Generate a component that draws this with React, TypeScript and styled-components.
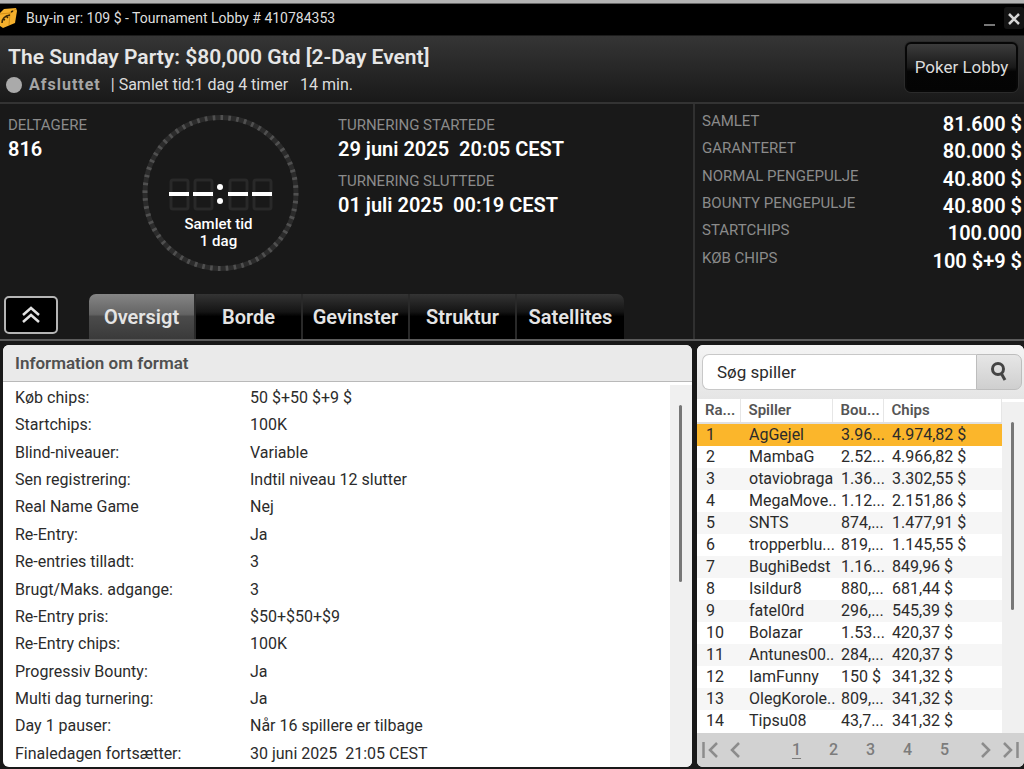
import React, { useState } from "react";
import styled, { createGlobalStyle, css } from "styled-components";

const GlobalStyle = createGlobalStyle`
  * { box-sizing: border-box; }
  body { margin: 0; background: #191919; font-family: Roboto, "Liberation Sans", sans-serif; }
  button, input { font-family: inherit; }
  h1, h2, p, dl, dt, dd, ol { margin: 0; padding: 0; }
`;

const Window = styled.div`
  display: flex;
  flex-direction: column;
  min-height: 100vh;
  background: #191919;
  border-top: 3px solid #b4b4b4;
  color: #fff;
`;

const TitleBar = styled.header`
  display: flex;
  align-items: center;
  height: 33px;
  padding-bottom: 3px;
  background: #000;
  border-top: 1px solid #666;
  border-bottom: 1px solid #1c1c1c;
`;

const TitleText = styled.p`
  flex: 1;
  margin-left: 9px;
  font-size: 14px;
  line-height: 20px;
  color: #dedede;
`;

const WindowButton = styled.button<{ $raised?: boolean }>`
  display: flex;
  align-items: center;
  justify-content: center;
  width: 20px;
  height: 22px;
  margin-left: 4px;
  padding: 2px 0 0;
  border: 0;
  border-radius: 3px;
  background: ${(p) => (p.$raised ? "#131313" : "transparent")};
`;

const Heading = styled.section`
  display: flex;
  justify-content: space-between;
  height: 68px;
  padding: 6px 6px 0 8px;
  background: linear-gradient(#353535, #191919);
  border-bottom: 2px solid #333;
`;

const Title = styled.h1`
  font-size: 21px;
  line-height: 30px;
  font-weight: 600;
  color: #e6e6e6;
`;

const Status = styled.p`
  display: flex;
  align-items: center;
  font-size: 16px;
  line-height: 26px;
  color: #dcdcdc;
  white-space: pre;
`;

const Dot = styled.span`
  width: 16px;
  height: 16px;
  margin: 0 7px 0 -2px;
  border-radius: 50%;
  background: #aaa;
`;

const Ended = styled.strong`
  margin-right: 10px;
  letter-spacing: 1px;
  color: #a5a5a5;
`;

const LobbyButton = styled.button`
  width: 113px;
  height: 50px;
  border: 2px solid #070707;
  border-radius: 6px;
  background: linear-gradient(#3c3c3c, #1a1a1a 50%, #050505 60%, #040404);
  box-shadow: 0 0 0 1px #2b2b2b;
  font-size: 17px;
  color: #dcdcdc;
  padding: 0;
`;

const columns = css`
  display: grid;
  grid-template-columns: minmax(0, 1fr) 331px;
`;

const Summary = styled.section`
  ${columns}
  height: 237px;
  border-bottom: 2px solid #5b5b5b;
`;

const SummaryMain = styled.div`
  display: flex;
  flex-direction: column;
  justify-content: space-between;
`;

const Facts = styled.div`
  display: flex;
  padding: 10px 8px 0;
`;

const Entrants = styled.dl`
  width: 134px;
`;

const Schedule = styled.dl`
  margin-left: 39px;
`;

const FactLabel = styled.dt`
  font-size: 15px;
  line-height: 22px;
  color: #8b8b8b;
`;

const FactValue = styled.dd`
  font-size: 20px;
  line-height: 26px;
  font-weight: 600;
  white-space: pre;
  margin-bottom: 8px;
`;

const Clock = styled.div`
  display: grid;
  width: 157px;
  height: 158px;
  > * { grid-area: 1 / 1; }
`;

const ClockText = styled.p`
  align-self: end;
  padding: 0 4px 22px 0;
  font-size: 15px;
  line-height: 17px;
  text-align: center;
  font-weight: 500;
`;

const TabBar = styled.nav`
  display: flex;
  align-items: flex-start;
  padding-left: 4px;
`;

const CollapseButton = styled.button`
  display: flex;
  align-items: center;
  justify-content: center;
  width: 54px;
  height: 38px;
  margin: 2px 31px 0 0;
  padding: 0;
  border: 2px solid #b5b5b5;
  border-radius: 5px;
  background: #000;
`;

const Tab = styled.button<{ $active: boolean }>`
  width: 107px;
  height: 45px;
  padding: 0;
  border: 0;
  border-right: 2px solid #292929;
  background: ${(p) =>
    p.$active ? "linear-gradient(#858585, #646464 45%, #4b4b4b 50%, #3a3a3a)" : "linear-gradient(#343434, #141414 40%, #000 50%)"};
  color: #e4e4e4;
  font-size: 20px;
  font-weight: 600;
  &:first-of-type { border-top-left-radius: 7px; }
  &:last-of-type { border-top-right-radius: 7px; border-right: 0; }
`;

const Tabs = styled.div`
  display: flex;
`;

const Stats = styled.dl`
  display: grid;
  grid-auto-rows: 1fr;
  padding: 7px 2px 64px 7px;
  border-left: 2px solid #303030;
`;

const Stat = styled.div`
  display: flex;
  justify-content: space-between;
`;

const StatLabel = styled.dt`
  font-size: 15px;
  line-height: 21px;
  color: #8b8b8b;
`;

const StatValue = styled.dd`
  font-size: 20px;
  line-height: 27px;
  font-weight: 600;
`;

const Body = styled.main`
  ${columns}
  flex: 1;
  grid-template-columns: minmax(0, 1fr) 327px;
  gap: 5px;
  padding: 4px 0 2px 3px;
`;

const Panel = styled.section`
  display: flex;
  flex-direction: column;
  overflow: hidden;
  border-radius: 6px;
  background: #fff;
  color: #2b2b2b;
`;

const PanelTitle = styled.h2`
  height: 37px;
  padding-left: 12px;
  border-bottom: 1px solid #b9b9b9;
  background: #eaeaea;
  font-size: 17px;
  line-height: 37px;
  font-weight: 600;
  color: #505050;
`;

const PanelBody = styled.div`
  flex: 1;
  display: flex;
`;

const FormatList = styled.dl`
  flex: 1;
  display: grid;
  grid-auto-rows: 1fr;
  padding: 2px 12px 0;
  font-size: 16px;
  line-height: 27px;
`;

const FormatRow = styled.div`
  display: grid;
  grid-template-columns: 235px 1fr;
  dd { white-space: pre; }
`;

const ScrollTrack = styled.div`
  width: 22px;
  margin-top: 3px;
  padding: 20px 10px 0 9px;
  background: #f0f0f0;
`;

const ScrollThumb = styled.div<{ $height: number }>`
  width: 3px;
  height: ${(p) => p.$height}px;
  border-radius: 2px;
  background: #777;
`;

const SearchForm = styled.form`
  display: flex;
  height: 54px;
  padding: 9px 2px 9px 5px;
  background: linear-gradient(#f4f4f4, #e5e5e5);
`;

const SearchInput = styled.input`
  flex: 1;
  min-width: 0;
  padding: 0 14px;
  border: 1px solid #c8c8c8;
  border-right: 0;
  border-radius: 7px 0 0 7px;
  background: #fff;
  font-size: 17px;
  color: #2b2b2b;
  &::placeholder { color: #2b2b2b; opacity: 1; }
`;

const SearchButton = styled.button`
  display: flex;
  align-items: center;
  justify-content: center;
  width: 46px;
  padding: 0;
  border: 1px solid #bdbdbd;
  border-radius: 0 7px 7px 0;
  background: linear-gradient(#e6e6e6, #cfcfcf);
`;

const PlayerTable = styled.table`
  flex: 1;
  min-width: 0;
  width: 100%;
  align-self: flex-start;
  table-layout: fixed;
  border-collapse: collapse;
  font-size: 16px;
`;

const HeadCell = styled.th<{ $width?: number }>`
  width: ${(p) => (p.$width ? `${p.$width}px` : "auto")};
  height: 24px;
  padding: 0 0 0 8px;
  border-right: 1px solid #e6e6e6;
  border-bottom: 2px solid #e0e0e0;
  font-size: 15px;
  line-height: 21px;
  font-weight: 600;
  text-align: left;
  color: #555;
`;

const PlayerRow = styled.tr<{ $selected: boolean }>`
  background: ${(p) => (p.$selected ? "#fbb62b" : "#fff")};
  &:nth-child(odd) { background: ${(p) => (p.$selected ? "#fbb62b" : "#f6f6f6")}; }
`;

const PlayerCell = styled.td`
  height: 22px;
  padding: 0 0 0 9px;
  line-height: 22px;
  white-space: nowrap;
`;

const Spacer = styled.tbody`
  td { height: 1px; padding: 0; }
`;

const Pager = styled.nav`
  display: flex;
  align-items: center;
  justify-content: space-between;
  height: 34px;
  padding: 0 5px;
  background: #d2d2d2;
`;

const PagerGroup = styled.div`
  display: flex;
  gap: 12px;
`;

const PagerPages = styled.div`
  display: flex;
  margin-left: 20px;
`;

const PageButton = styled.button<{ $current: boolean }>`
  width: 37px;
  padding: 0;
  border: 0;
  background: none;
  font-size: 16px;
  font-weight: 500;
  line-height: 24px;
  color: #7c7c7c;
  text-decoration: ${(p) => (p.$current ? "underline" : "none")};
  text-underline-offset: 3px;
`;

const IconButton = styled.button`
  display: flex;
  padding: 0;
  border: 0;
  background: none;
`;

const stats = [
  ["SAMLET", "81.600 $"],
  ["GARANTERET", "80.000 $"],
  ["NORMAL PENGEPULJE", "40.800 $"],
  ["BOUNTY PENGEPULJE", "40.800 $"],
  ["STARTCHIPS", "100.000"],
  ["KØB CHIPS", "100 $+9 $"],
];

const format = [
  ["Køb chips:", "50 $+50 $+9 $"],
  ["Startchips:", "100K"],
  ["Blind-niveauer:", "Variable"],
  ["Sen registrering:", "Indtil niveau 12 slutter"],
  ["Real Name Game", "Nej"],
  ["Re-Entry:", "Ja"],
  ["Re-entries tilladt:", "3"],
  ["Brugt/Maks. adgange:", "3"],
  ["Re-Entry pris:", "$50+$50+$9"],
  ["Re-Entry chips:", "100K"],
  ["Progressiv Bounty:", "Ja"],
  ["Multi dag turnering:", "Ja"],
  ["Day 1 pauser:", "Når 16 spillere er tilbage"],
  ["Finaledagen fortsætter:", "30 juni 2025  21:05 CEST"],
];

const players = [
  ["1", "AgGejel", "3.96...", "4.974,82 $"],
  ["2", "MambaG", "2.52...", "4.966,82 $"],
  ["3", "otaviobraga", "1.36...", "3.302,55 $"],
  ["4", "MegaMove..", "1.12...", "2.151,86 $"],
  ["5", "SNTS", "874,...", "1.477,91 $"],
  ["6", "tropperblu...", "819,...", "1.145,55 $"],
  ["7", "BughiBedst", "1.16...", "849,96 $"],
  ["8", "Isildur8", "880,...", "681,44 $"],
  ["9", "fatel0rd", "296,...", "545,39 $"],
  ["10", "Bolazar", "1.53...", "420,37 $"],
  ["11", "Antunes00..", "284,...", "420,37 $"],
  ["12", "IamFunny", "150 $", "341,32 $"],
  ["13", "OlegKorole..", "809,...", "341,32 $"],
  ["14", "Tipsu08", "43,7...", "341,32 $"],
];

const tabs = ["Oversigt", "Borde", "Gevinster", "Struktur", "Satellites"];

function Logo() {
  return (
    <svg width="17" height="20" viewBox="0 0 17 20" aria-hidden="true">
      <path d="M0 5 4 1 16 0 17 3 15 15 3 20 0 18Z" fill="#f5b02c" />
      <path d="M0 6 10 5 16 1M10 5 9 17" stroke="#d08c15" fill="none" />
      <path d="M2 15c0-4 2-7 8-8M3 11l2 1M6 8l2 2M11 4l2-1" stroke="#3a2707" strokeWidth="1.5" fill="none" />
    </svg>
  );
}

function Dial() {
  const digits = [27, 51, 86, 110];
  return (
    <svg width="157" height="158" viewBox="0 0 157 158" aria-hidden="true">
      <circle cx="78.5" cy="79" r="75.5" fill="none" stroke="#2b2b2b" strokeWidth="5" />
      <circle cx="78.5" cy="79" r="75.5" fill="none" stroke="#505050" strokeWidth="5" pathLength="360" strokeDasharray="2 4" />
      {digits.map((x) => (
        <g key={x}>
          <rect x={x + 2} y="66" width="17" height="29" rx="2" fill="none" stroke="#292929" strokeWidth="3" />
          <path d={`M${x} 80h20`} stroke="#fff" strokeWidth="4" />
        </g>
      ))}
      <circle cx="78" cy="73" r="3" fill="#fff" />
      <circle cx="78" cy="87" r="3" fill="#fff" />
    </svg>
  );
}

function Chevron({ flip, bar }: { flip?: boolean; bar?: boolean }) {
  return (
    <svg width={bar ? 16 : 10} height="18" viewBox={bar ? "-6 0 16 18" : "0 0 10 18"} transform={flip ? "scale(-1 1)" : undefined} aria-hidden="true">
      <path d={bar ? "M9 2 2 9l7 7M-4.5 1v16" : "M9 2 2 9l7 7"} fill="none" stroke="#8c8c8c" strokeWidth="2.5" />
    </svg>
  );
}

export default function App() {
  const [tab, setTab] = useState("Oversigt");
  const [page, setPage] = useState(1);
  return (
    <Window>
      <GlobalStyle />
      <TitleBar>
        <Logo />
        <TitleText>Buy-in er: 109 $ - Tournament Lobby # 410784353</TitleText>
        <WindowButton aria-label="Minimer">
          <svg width="12" height="18"><path d="M0 15h11" stroke="#777" strokeWidth="2" /></svg>
        </WindowButton>
        <WindowButton $raised aria-label="Luk">
          <svg width="12" height="12"><path d="M1 1l10 10M11 1 1 11" stroke="#d5d5d5" strokeWidth="2.5" /></svg>
        </WindowButton>
      </TitleBar>
      <Heading>
        <div>
          <Title>The Sunday Party: $80,000 Gtd [2-Day Event]</Title>
          <Status>
            <Dot />
            <Ended>Afsluttet</Ended>
            {"| Samlet tid:1 dag 4 timer   14 min."}
          </Status>
        </div>
        <LobbyButton>Poker Lobby</LobbyButton>
      </Heading>
      <Summary>
        <SummaryMain>
          <Facts>
            <Entrants>
              <FactLabel>DELTAGERE</FactLabel>
              <FactValue>816</FactValue>
            </Entrants>
            <Clock>
              <Dial />
              <ClockText>Samlet tid<br />1 dag</ClockText>
            </Clock>
            <Schedule>
              <FactLabel>TURNERING STARTEDE</FactLabel>
              <FactValue>{"29 juni 2025  20:05 CEST"}</FactValue>
              <FactLabel>TURNERING SLUTTEDE</FactLabel>
              <FactValue>{"01 juli 2025  00:19 CEST"}</FactValue>
            </Schedule>
          </Facts>
          <TabBar>
            <CollapseButton aria-label="Skjul">
              <svg width="20" height="18"><path d="m2 9 8-7 8 7M2 16l8-7 8 7" fill="none" stroke="#e2e2e2" strokeWidth="2.5" /></svg>
            </CollapseButton>
            <Tabs>
              {tabs.map((name) => (
                <Tab key={name} $active={name === tab} onClick={() => setTab(name)}>{name}</Tab>
              ))}
            </Tabs>
          </TabBar>
        </SummaryMain>
        <Stats>
          {stats.map(([label, value]) => (
            <Stat key={label}>
              <StatLabel>{label}</StatLabel>
              <StatValue>{value}</StatValue>
            </Stat>
          ))}
        </Stats>
      </Summary>
      <Body>
        <Panel>
          <PanelTitle>Information om format</PanelTitle>
          <PanelBody>
            <FormatList>
              {format.map(([label, value]) => (
                <FormatRow key={label}>
                  <dt>{label}</dt>
                  <dd>{value}</dd>
                </FormatRow>
              ))}
            </FormatList>
            <ScrollTrack><ScrollThumb $height={177} /></ScrollTrack>
          </PanelBody>
        </Panel>
        <Panel>
          <SearchForm onSubmit={(e) => e.preventDefault()}>
            <SearchInput aria-label="Søg spiller" placeholder="Søg spiller" />
            <SearchButton aria-label="Søg">
              <svg width="18" height="22"><circle cx="8" cy="8" r="5.5" fill="none" stroke="#444" strokeWidth="3" /><path d="m11 12 4 7" stroke="#444" strokeWidth="3" /></svg>
            </SearchButton>
          </SearchForm>
          <PanelBody>
            <PlayerTable>
              <thead>
                <tr>
                  <HeadCell $width={43}>Ra...</HeadCell>
                  <HeadCell $width={92}>Spiller</HeadCell>
                  <HeadCell $width={51}>Bou...</HeadCell>
                  <HeadCell>Chips</HeadCell>
                </tr>
              </thead>
              <Spacer><tr><td colSpan={4} /></tr></Spacer>
              <tbody>
                {players.map((row) => (
                  <PlayerRow key={row[0]} $selected={row[0] === "1"}>
                    {row.map((cell, i) => <PlayerCell key={i}>{cell}</PlayerCell>)}
                  </PlayerRow>
                ))}
              </tbody>
            </PlayerTable>
            <ScrollTrack><ScrollThumb $height={188} /></ScrollTrack>
          </PanelBody>
          <Pager aria-label="Sider">
            <PagerGroup>
              <IconButton aria-label="Første side"><Chevron bar /></IconButton>
              <IconButton aria-label="Forrige side"><Chevron /></IconButton>
            </PagerGroup>
            <PagerPages>
              {[1, 2, 3, 4, 5].map((n) => (
                <PageButton key={n} $current={n === page} onClick={() => setPage(n)}>{n}</PageButton>
              ))}
            </PagerPages>
            <PagerGroup>
              <IconButton aria-label="Næste side"><Chevron flip /></IconButton>
              <IconButton aria-label="Sidste side"><Chevron flip bar /></IconButton>
            </PagerGroup>
          </Pager>
        </Panel>
      </Body>
    </Window>
  );
}
